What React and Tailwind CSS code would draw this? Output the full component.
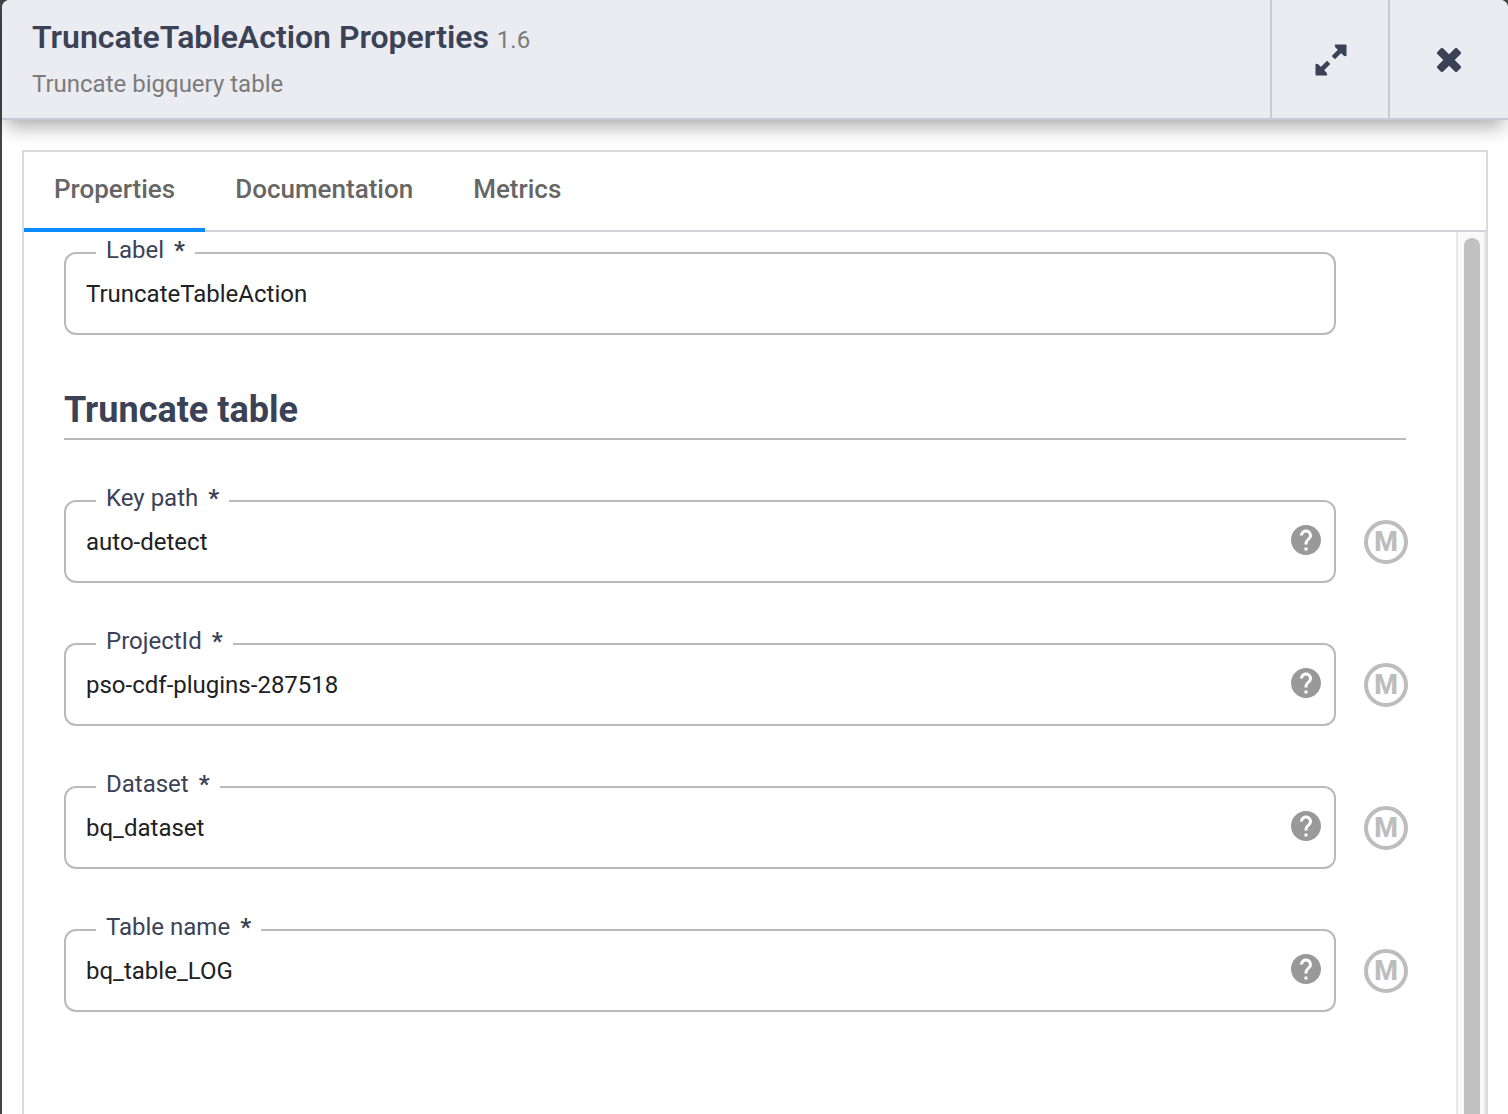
import { MdHelp } from "react-icons/md";

const fields = [
  { id: "key-path", label: "Key path", value: "auto-detect" },
  { id: "project-id", label: "ProjectId", value: "pso-cdf-plugins-287518" },
  { id: "dataset", label: "Dataset", value: "bq_dataset" },
  { id: "table-name", label: "Table name", value: "bq_table_LOG" },
];

const tabs = ["Properties", "Documentation", "Metrics"];

function ExpandIcon() {
  return (
    <svg width="32" height="32" viewBox="0 0 32 32" fill="#3b4256" stroke="#3b4256" aria-hidden="true">
      <path d="M20.5 1.2H30.8V11.5L29 11L21 3Z" strokeWidth="1.4" strokeLinejoin="round" />
      <path d="M27 5L18.3 13.7" strokeWidth="4.6" fill="none" />
      <path d="M11.5 30.8H1.2V20.5L3 21L11 29Z" strokeWidth="1.4" strokeLinejoin="round" />
      <path d="M5 27L13.7 18.3" strokeWidth="4.6" fill="none" />
    </svg>
  );
}

function CloseIcon() {
  return (
    <svg width="24" height="24" viewBox="0 0 24 24" fill="#3b4256" aria-hidden="true">
      <rect x="-2" y="8" width="28" height="8" rx="1.8" transform="rotate(45 12 12)" />
      <rect x="-2" y="8" width="28" height="8" rx="1.8" transform="rotate(-45 12 12)" />
    </svg>
  );
}

function Field({ id, label, value, help }) {
  return (
    <fieldset className="min-w-0 flex-1 rounded-xl border-2 border-[#bababa]">
      <legend className="ml-[30px] px-2.5 pb-1.5 text-2xl leading-6 text-[#3b4256]">
        <label htmlFor={id} className="flex gap-2.5">
          {label}
          <span className="font-bold">*</span>
        </label>
      </legend>
      <div className="-mt-3.5 flex h-[79px] items-center pr-2.5 pl-5">
        <input
          id={id}
          defaultValue={value}
          className="h-10 min-w-0 flex-1 bg-transparent text-2xl text-[#202124] outline-none"
        />
        {help && (
          <button type="button" aria-label={`Help for ${label}`} className="mb-1 text-[#999]">
            <MdHelp size={36} />
          </button>
        )}
      </div>
    </fieldset>
  );
}

export default function App() {
  return (
    <div className="h-screen overflow-hidden bg-[#454547] pl-0.5 font-[Roboto,sans-serif]">
      <div className="flex h-full flex-col rounded-t-lg bg-white">
        <header className="flex h-[120px] shrink-0 rounded-t-lg border-b-2 border-[#c8cad5] bg-[#ebecf1] shadow-[0_10px_20px_-4px_rgba(0,0,0,0.35)]">
          <div className="flex-1 pt-4 pl-[30px]">
            <h1 className="text-[32px] leading-[42px] font-semibold text-[#3b4256]">
              TruncateTableAction Properties{" "}
              <small className="text-2xl font-normal text-[#7b7b7b]">1.6</small>
            </h1>
            <p className="mt-2.5 text-2xl leading-8 text-[#7b7b7b]">Truncate bigquery table</p>
          </div>
          <button
            type="button"
            aria-label="Expand"
            className="flex w-[118px] items-center justify-center border-l-2 border-[#c8cad5] pt-0.5 pl-0.5"
          >
            <ExpandIcon />
          </button>
          <button
            type="button"
            aria-label="Close"
            className="flex w-[120px] items-center justify-center border-l-2 border-[#c8cad5] pt-0.5"
          >
            <CloseIcon />
          </button>
        </header>

        <main className="mx-5 mt-[30px] flex min-h-0 flex-1 flex-col border-2 border-b-0 border-[#dbdbdb]">
          <div role="tablist" className="flex h-20 shrink-0 border-b-2 border-[#d0d3da]">
            {tabs.map((tab, i) => (
              <button
                key={tab}
                type="button"
                role="tab"
                aria-selected={i === 0}
                className="-mb-0.5 border-b-4 border-transparent px-[30px] pb-0.5 text-[26px] font-medium text-[#666] aria-selected:border-[#0a8cff]"
              >
                {tab}
              </button>
            ))}
          </div>

          <div className="flex min-h-0 flex-1">
            <form className="min-w-0 flex-1 overflow-hidden pr-[50px] pl-10">
              <div className="mt-1.5 mr-[70px] flex">
                <Field id="label" label="Label" value="TruncateTableAction" />
              </div>
              <h2 className="mt-[51px] border-b-2 border-[#bababa] pb-1 text-4xl leading-[48px] font-bold text-[#3b4256]">
                Truncate table
              </h2>
              <div className="mt-[46px] flex flex-col gap-[46px]">
                {fields.map((f) => (
                  <div key={f.id} className="flex items-end gap-7">
                    <Field {...f} help />
                    <button
                      type="button"
                      aria-label={`Set macro for ${f.label}`}
                      className="-mr-0.5 mb-[19px] flex size-11 items-center justify-center rounded-full border-4 border-[#bdbdbd] text-[27px] leading-9 font-extrabold text-[#bdbdbd]"
                    >
                      M
                    </button>
                  </div>
                ))}
              </div>
            </form>
            <div className="flex w-[30px] justify-center border-x-2 border-[#e8e8e8] bg-[#fafafa] pt-1.5 pl-0.5">
              <div className="w-4 rounded-t-full bg-[#c1c1c1]" />
            </div>
          </div>
        </main>
      </div>
    </div>
  );
}
